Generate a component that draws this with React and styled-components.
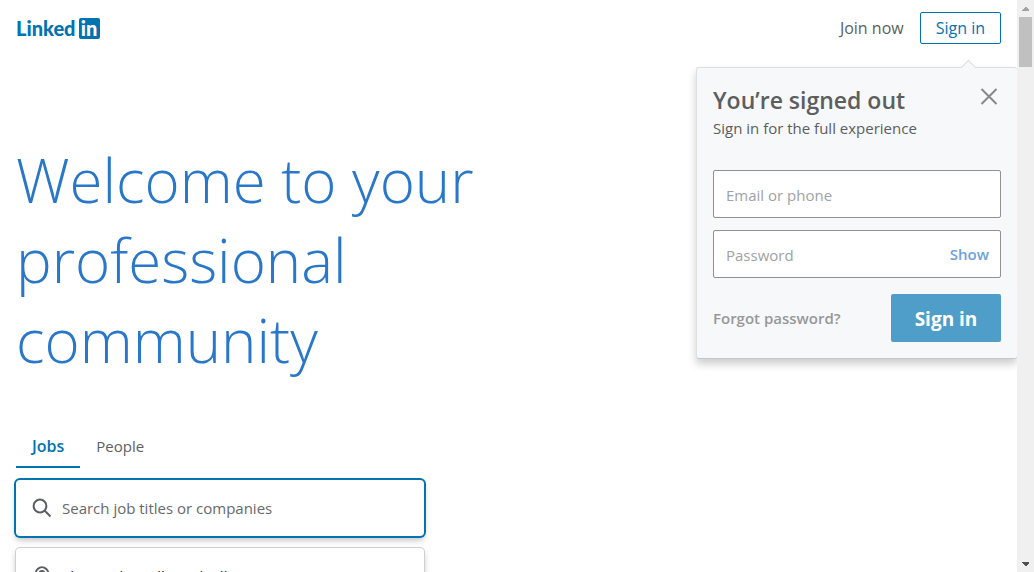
import React, { useState } from "react";
import styled, { createGlobalStyle } from "styled-components";

const GlobalStyle = createGlobalStyle`
  *, *::before, *::after { box-sizing: border-box; }
  body {
    margin: 0;
    background: #fff;
    color: #5c5e60;
    font-family: "Open Sans", "Noto Sans", sans-serif;
    font-size: 15px;
    line-height: 20px;
  }
  button, input { font: inherit; color: inherit; }
`;

const Frame = styled.div`
  display: flex;
  height: 100vh;
  overflow: hidden;
`;

const Page = styled.div`
  position: relative;
  flex: 1;
  min-width: 0;
  overflow: hidden;
`;

const Header = styled.header`
  display: flex;
  align-items: center;
  justify-content: space-between;
  padding: 12px 16px;
`;

const Logo = styled.a`
  display: flex;
  align-items: center;
  gap: 3px;
  color: #0073b1;
  font-family: Lato, sans-serif;
  font-size: 20px;
  font-weight: 900;
  line-height: 21px;
  text-decoration: none;
`;

const LogoBadge = styled.span`
  width: 21px;
  height: 21px;
  border-radius: 2px;
  background: #0073b1;
  color: #fff;
  text-align: center;
`;

const Actions = styled.nav`
  display: flex;
  align-items: center;
  gap: 16px;
`;

const JoinLink = styled.a`
  color: #5c5e60;
  font-size: 16px;
  text-decoration: none;
`;

const OutlineButton = styled.button`
  height: 32px;
  padding: 0 15px;
  border: 1px solid #0073b1;
  border-radius: 2px;
  background: #fff;
  color: #0073b1;
  font-size: 16px;
  font-weight: 500;
`;

const Hero = styled.main`
  display: flex;
  flex-direction: column;
  max-width: 520px;
  padding: 84px 16px 0;
`;

const Title = styled.h1`
  margin: 0;
  color: #2977c9;
  font-size: 60px;
  font-weight: 300;
  line-height: 80px;
`;

const Tabs = styled.div`
  display: flex;
  margin-top: 48px;
`;

const Tab = styled.button`
  height: 40px;
  padding: 0 16px 2px;
  border: 0;
  border-bottom: 2px solid ${(p) => (p.$active ? "#0073b1" : "transparent")};
  background: none;
  color: ${(p) => (p.$active ? "#0073b1" : "#5c5e60")};
  font-size: ${(p) => (p.$active ? 16 : 15)}px;
  font-weight: ${(p) => (p.$active ? 600 : 400)};
`;

const SearchForm = styled.form`
  display: flex;
  flex-direction: column;
  gap: 12px;
  max-width: 408px;
  margin-top: 12px;
`;

const SearchBox = styled.label`
  display: flex;
  align-items: center;
  gap: 8px;
  height: 56px;
  padding: 0 16px 0 14px;
  border-radius: 4px;
  background: #fff;
  box-shadow: 0 0 0 ${(p) => (p.$active ? "2px #0073b1" : "1px #cfcfcf")},
    0 4px 6px rgba(0, 0, 0, 0.25);
`;

const SearchInput = styled.input`
  flex: 1;
  min-width: 0;
  padding: 0;
  border: 0;
  outline: 0;
  background: none;
  color: #222;
  &::placeholder { color: #66696b; opacity: 1; }
`;

const Panel = styled.section`
  position: absolute;
  top: 67px;
  right: 0;
  width: 321px;
  padding: 20px 16px 16px;
  border: 1px solid #dcdee0;
  border-right-width: 0;
  border-bottom-color: #c4c6c8;
  border-radius: 3px;
  background: #f6f8fa;
  box-shadow: 0 5px 8px rgba(0, 0, 0, 0.2);
  &::before {
    content: "";
    position: absolute;
    top: -6px;
    right: 43px;
    width: 11px;
    height: 11px;
    border: 1px solid #dcdee0;
    border-width: 1px 0 0 1px;
    background: #f6f8fa;
    transform: rotate(45deg);
  }
`;

const PanelHead = styled.div`
  display: flex;
  align-items: flex-start;
  justify-content: space-between;
`;

const PanelTitle = styled.h2`
  margin: 0;
  font-size: 23px;
  font-weight: 600;
  line-height: 24px;
`;

const PanelText = styled.p`
  margin: 6px 0 0;
`;

const CloseButton = styled.button`
  display: flex;
  padding: 0;
  border: 0;
  background: none;
  color: #86888a;
`;

const Fields = styled.form`
  display: flex;
  flex-direction: column;
  gap: 12px;
  margin-top: 32px;
`;

const Field = styled.label`
  display: flex;
  align-items: center;
  height: 48px;
  padding: 0 11px 0 12px;
  border: 1px solid #8f9193;
  border-radius: 2px;
  background: #fff;
`;

const FieldInput = styled.input`
  flex: 1;
  min-width: 0;
  padding: 2px 0 0;
  border: 0;
  outline: 0;
  background: none;
  &::placeholder { color: #a0a2a4; opacity: 1; }
`;

const ShowButton = styled.button`
  padding: 0;
  border: 0;
  background: none;
  color: #6f9fdc;
  font-weight: 600;
`;

const FormFoot = styled.div`
  display: flex;
  align-items: center;
  justify-content: space-between;
  margin-top: 4px;
`;

const ForgotLink = styled.a`
  color: #969899;
  font-weight: 600;
  text-decoration: none;
`;

const SubmitButton = styled.button`
  width: 110px;
  height: 48px;
  padding: 2px 0 0;
  border: 0;
  border-radius: 2px;
  background: #4f9ec9;
  color: #fff;
  font-size: 19px;
  font-weight: 700;
`;

const ScrollTrack = styled.div`
  display: flex;
  flex-direction: column;
  align-items: center;
  width: 17px;
  background: #f0f0f0;
`;

const ScrollThumb = styled.div`
  width: 13px;
  height: 50px;
  margin-bottom: auto;
  background: #c0c0c0;
`;

function ScrollArrow({ down }) {
  return (
    <svg width="17" height="17" viewBox="0 0 17 17" shapeRendering="crispEdges" aria-hidden="true">
      {down ? <path d="M5 7h7v1l-3 3h-1l-3-3z" fill="#505050" /> : <path d="M5 11h7v-1l-3-3h-1l-3 3z" fill="#a3a3a3" />}
    </svg>
  );
}

export default function App() {
  const [tab, setTab] = useState("Jobs");
  const [place, setPlace] = useState("Shoreside Mall, Nashville");
  return (
    <Frame>
      <GlobalStyle />
      <Page>
        <Header>
          <Logo href="#" aria-label="LinkedIn">
            Linked<LogoBadge>in</LogoBadge>
          </Logo>
          <Actions>
            <JoinLink href="#join">Join now</JoinLink>
            <OutlineButton type="button">Sign in</OutlineButton>
          </Actions>
        </Header>
        <Hero>
          <Title>Welcome to your professional community</Title>
          <Tabs>
            {["Jobs", "People"].map((name) => (
              <Tab key={name} type="button" $active={tab === name} onClick={() => setTab(name)}>
                {name}
              </Tab>
            ))}
          </Tabs>
          <SearchForm>
            <SearchBox $active>
              <svg width="24" height="24" viewBox="0 0 24 24" fill="none" stroke="#5c5e60" strokeWidth="2" aria-hidden="true">
                <circle cx="10" cy="10" r="6.400" />
                <path d="M14.500 14.500l6 6" />
              </svg>
              <SearchInput aria-label="Search job titles or companies" placeholder="Search job titles or companies" />
            </SearchBox>
            <SearchBox>
              <svg width="24" height="24" viewBox="0 0 24 24" fill="none" stroke="#5c5e60" strokeWidth="2" aria-hidden="true">
                <path d="M12 22l-5-8.500a6.300 6.300 0 1 1 10 0z" />
                <circle cx="12" cy="9.500" r="2.500" />
              </svg>
              <SearchInput aria-label="Location" value={place} onChange={(e) => setPlace(e.target.value)} />
            </SearchBox>
          </SearchForm>
        </Hero>
        <Panel>
          <PanelHead>
            <div>
              <PanelTitle>You’re signed out</PanelTitle>
              <PanelText>Sign in for the full experience</PanelText>
            </div>
            <CloseButton type="button" aria-label="Close">
              <svg width="24" height="18" viewBox="0 0 24 18" fill="none" stroke="currentColor" strokeWidth="2" aria-hidden="true">
                <path d="M4.500 1l15 15M19.500 1l-15 15" />
              </svg>
            </CloseButton>
          </PanelHead>
          <Fields>
            <Field>
              <FieldInput aria-label="Email or phone" placeholder="Email or phone" />
            </Field>
            <Field>
              <FieldInput type="password" aria-label="Password" placeholder="Password" />
              <ShowButton type="button">Show</ShowButton>
            </Field>
            <FormFoot>
              <ForgotLink href="#forgot">Forgot password?</ForgotLink>
              <SubmitButton type="button">Sign in</SubmitButton>
            </FormFoot>
          </Fields>
        </Panel>
      </Page>
      <ScrollTrack aria-hidden="true">
        <ScrollArrow />
        <ScrollThumb />
        <ScrollArrow down />
      </ScrollTrack>
    </Frame>
  );
}
